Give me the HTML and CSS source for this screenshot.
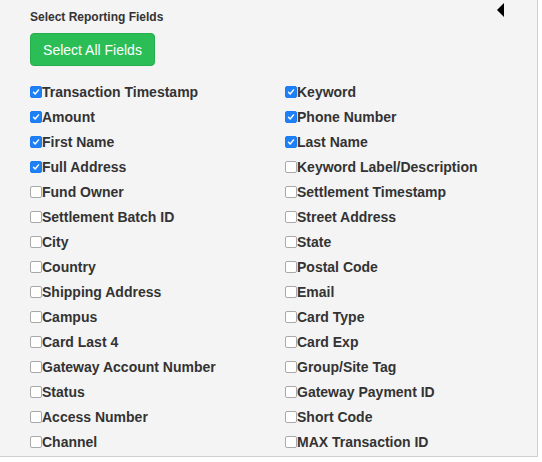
FILE: index.html
```html
<!DOCTYPE html>
<html>
<head>
<meta charset="utf-8">
<link rel="stylesheet" href="styles.css">
</head>
<body>
<div class="panel">
  <span class="toggle"></span>
  <div class="title">Select Reporting Fields</div>
  <button class="btn">Select All Fields</button>
  <div class="fields">
    <label class="field"><span class="box on"><svg viewBox="0 0 11 11"><path d="M2.8 5.8 L4.6 7.7 L8.3 3.2" fill="none" stroke="#fff" stroke-width="1.6" stroke-linecap="round" stroke-linejoin="round"/></svg></span>Transaction Timestamp</label>
    <label class="field"><span class="box on"><svg viewBox="0 0 11 11"><path d="M2.8 5.8 L4.6 7.7 L8.3 3.2" fill="none" stroke="#fff" stroke-width="1.6" stroke-linecap="round" stroke-linejoin="round"/></svg></span>Keyword</label>
    <label class="field"><span class="box on"><svg viewBox="0 0 11 11"><path d="M2.8 5.8 L4.6 7.7 L8.3 3.2" fill="none" stroke="#fff" stroke-width="1.6" stroke-linecap="round" stroke-linejoin="round"/></svg></span>Amount</label>
    <label class="field"><span class="box on"><svg viewBox="0 0 11 11"><path d="M2.8 5.8 L4.6 7.7 L8.3 3.2" fill="none" stroke="#fff" stroke-width="1.6" stroke-linecap="round" stroke-linejoin="round"/></svg></span>Phone Number</label>
    <label class="field"><span class="box on"><svg viewBox="0 0 11 11"><path d="M2.8 5.8 L4.6 7.7 L8.3 3.2" fill="none" stroke="#fff" stroke-width="1.6" stroke-linecap="round" stroke-linejoin="round"/></svg></span>First Name</label>
    <label class="field"><span class="box on"><svg viewBox="0 0 11 11"><path d="M2.8 5.8 L4.6 7.7 L8.3 3.2" fill="none" stroke="#fff" stroke-width="1.6" stroke-linecap="round" stroke-linejoin="round"/></svg></span>Last Name</label>
    <label class="field"><span class="box on"><svg viewBox="0 0 11 11"><path d="M2.8 5.8 L4.6 7.7 L8.3 3.2" fill="none" stroke="#fff" stroke-width="1.6" stroke-linecap="round" stroke-linejoin="round"/></svg></span>Full Address</label>
    <label class="field"><span class="box"></span>Keyword Label/Description</label>
    <label class="field"><span class="box"></span>Fund Owner</label>
    <label class="field"><span class="box"></span>Settlement Timestamp</label>
    <label class="field"><span class="box"></span>Settlement Batch ID</label>
    <label class="field"><span class="box"></span>Street Address</label>
    <label class="field"><span class="box"></span>City</label>
    <label class="field"><span class="box"></span>State</label>
    <label class="field"><span class="box"></span>Country</label>
    <label class="field"><span class="box"></span>Postal Code</label>
    <label class="field"><span class="box"></span>Shipping Address</label>
    <label class="field"><span class="box"></span>Email</label>
    <label class="field"><span class="box"></span>Campus</label>
    <label class="field"><span class="box"></span>Card Type</label>
    <label class="field"><span class="box"></span>Card Last 4</label>
    <label class="field"><span class="box"></span>Card Exp</label>
    <label class="field"><span class="box"></span>Gateway Account Number</label>
    <label class="field"><span class="box"></span>Group/Site Tag</label>
    <label class="field"><span class="box"></span>Status</label>
    <label class="field"><span class="box"></span>Gateway Payment ID</label>
    <label class="field"><span class="box"></span>Access Number</label>
    <label class="field"><span class="box"></span>Short Code</label>
    <label class="field"><span class="box"></span>Channel</label>
    <label class="field"><span class="box"></span>MAX Transaction ID</label>
  </div>
</div>
</body>
</html>
```
FILE: styles.css
```css
html, body {
  margin: 0;
  padding: 0;
  background: #ffffff;
}
body {
  font-family: "Liberation Sans", Arial, sans-serif;
  color: #333333;
}
.panel {
  position: relative;
  width: 538px;
  height: 457px;
  box-sizing: border-box;
  background: #f4f4f4;
  border-right: 1px solid #cfcfcf;
  border-bottom: 1px solid #cfcfcf;
  padding: 10px 0 0 30px;
}
.toggle {
  position: absolute;
  left: 497px;
  top: 3px;
  width: 0;
  height: 0;
  border-top: 7px solid transparent;
  border-bottom: 7px solid transparent;
  border-right: 7px solid #000;
}
.title {
  font-size: 12px;
  font-weight: bold;
  line-height: 14px;
  color: #333;
}
.btn {
  display: block;
  margin-top: 9px;
  width: 125px;
  height: 33px;
  padding: 0;
  border: 1px solid #26ad4c;
  border-radius: 4px;
  background: #2bbe56;
  color: #ffffff;
  font-family: "Liberation Sans", Arial, sans-serif;
  font-size: 14px;
  line-height: 33px;
}
.fields {
  display: grid;
  grid-template-columns: 255px 220px;
  grid-auto-rows: 25px;
  margin-top: 13px;
}
.field {
  display: flex;
  align-items: center;
  font-size: 14px;
  font-weight: bold;
  color: #333;
  white-space: nowrap;
}
.box {
  width: 10px;
  height: 10px;
  margin-right: 0;
  border: 1px solid #a9a9a9;
  border-radius: 2px;
  background: #fff;
  flex: none;
  display: flex;
}
.box.on {
  border-color: #1c7cf2;
  background: #1f80f5;
}
.box svg {
  width: 10px;
  height: 10px;
}
```
